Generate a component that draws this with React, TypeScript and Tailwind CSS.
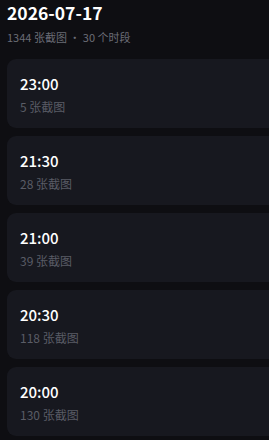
const slots = [
  { time: "23:00", count: 5 },
  { time: "21:30", count: 28 },
  { time: "21:00", count: 39 },
  { time: "20:30", count: 118 },
  { time: "20:00", count: 130 },
];

export default function App() {
  return (
    <div
      className="min-h-screen w-full overflow-hidden bg-[#0e0e12] pl-[7px] pt-[1px]"
      style={{ fontFamily: '"Noto Sans CJK SC", "Noto Sans", sans-serif' }}
    >
      <h1 className="text-[17.5px] font-bold leading-[24px] text-white">2026-07-17</h1>
      <p className="mt-[3px] text-[11px] leading-[18px] text-[#6b6d76]">1344 张截图 · 30 个时段</p>
      <div className="mt-[13px] flex w-[320px] flex-col gap-[8px]">
        {slots.map((s) => (
          <div
            key={s.time}
            className="flex h-[69px] flex-col rounded-[9px] bg-[#17181f] px-[13px] pt-[14px]"
          >
            <span className="text-[15px] font-medium leading-[22px] text-white">{s.time}</span>
            <span className="mt-[3px] text-[12px] leading-[18px] text-[#5a5c66]">
              {s.count} 张截图
            </span>
          </div>
        ))}
      </div>
    </div>
  );
}
